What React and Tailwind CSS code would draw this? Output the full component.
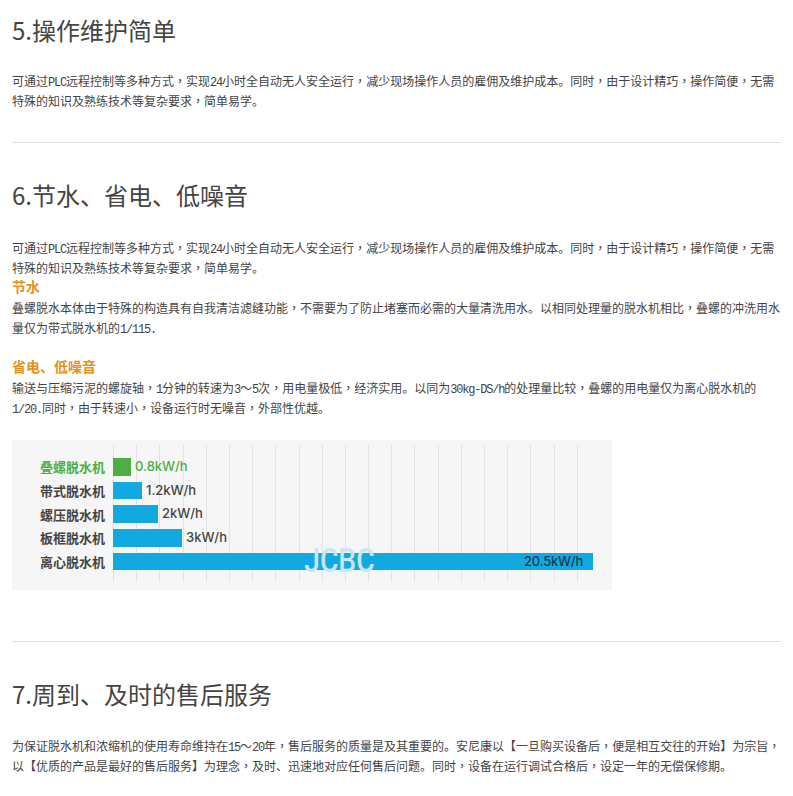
const bodyFont = "font-['Noto_Sans_CJK_SC',sans-serif]";

// latin runs use a squeezed mono so each char takes half a CJK cell, like SimSun
function Txt({ children }) {
  const parts = children.split(/([A-Za-z0-9/.\-]+|，)/);
  return parts.map((p, i) => {
    if (p === "，") {
      return (
        <span key={i} className="font-['Noto_Sans_CJK_TC',sans-serif] leading-none">
          {p}
        </span>
      );
    }
    if (/^[A-Za-z0-9/.\-]+$/.test(p)) {
      return (
        <span key={i} className="font-['Liberation_Mono',monospace] text-xs leading-none tracking-[-1.2px] whitespace-nowrap">
          {p}
        </span>
      );
    }
    return p;
  });
}

function Line({ children }) {
  return (
    <p className="text-xs leading-5 text-[#444]">
      <Txt>{children}</Txt>
    </p>
  );
}

function Heading({ children }) {
  return <h2 className="h-[62px] text-2xl leading-[60px] text-[#444]">{children}</h2>;
}

const intro =
  "可通过PLC远程控制等多种方式，实现24小时全自动无人安全运行，减少现场操作人员的雇佣及维护成本。同时，由于设计精巧，操作简便，无需特殊的知识及熟练技术等复杂要求，简单易学。";

const rows = [
  { name: "叠螺脱水机", value: "0.8kW/h", w: "w-[18px]", bar: "bg-[#4cae44]", text: "text-[#4cae44]" },
  { name: "带式脱水机", value: "1.2kW/h", w: "w-[29px]", bar: "bg-[#12a9e0]", text: "text-[#444]" },
  { name: "螺压脱水机", value: "2kW/h", w: "w-[45px]", bar: "bg-[#12a9e0]", text: "text-[#444]" },
  { name: "板框脱水机", value: "3kW/h", w: "w-[69px]", bar: "bg-[#12a9e0]", text: "text-[#444]" },
];

function Chart() {
  return (
    <div className="relative mt-[22px] h-[150px] w-[600px] bg-[#f6f6f7] pt-[18px] pl-7">
      {/* grid lines */}
      <div className="absolute top-[5px] left-[101px] flex h-[137px] w-[465px] justify-between">
        {Array.from({ length: 21 }).map((_, i) => (
          <div key={i} className="w-px bg-[#e4e4e4]" />
        ))}
      </div>
      <div className="relative flex flex-col gap-[6.2px]">
        {rows.map((r) => (
          <div key={r.name} className="flex h-[17.5px] items-center gap-2">
            <div className={`w-[65px] text-[13px] leading-none font-bold whitespace-nowrap ${r.text}`}>{r.name}</div>
            <div className={`h-full ${r.w} ${r.bar}`} />
            <div className={`-ml-1 font-['Inter',sans-serif] text-[13px] font-medium ${r.text}`}>{r.value}</div>
          </div>
        ))}
        <div className="flex h-[17.5px] items-center gap-2">
          <div className="w-[65px] text-[13px] leading-none font-bold whitespace-nowrap text-[#444]">离心脱水机</div>
          <div className="flex h-full w-[480px] items-center justify-end bg-[#12a9e0] pr-[10px] font-['Inter',sans-serif] text-[13px] font-medium tracking-[-0.2px] text-[#1c3a55]">
            20.5kW/h
          </div>
        </div>
      </div>
      {/* watermark */}
      <div className="absolute top-[105px] left-[285px] w-[70px] text-center font-['Roboto',sans-serif] text-[34px] leading-[30px] font-medium text-[#c9e6f3]">
        <span className="inline-block scale-x-[0.83] whitespace-nowrap">JCBC</span>
      </div>
    </div>
  );
}

export default function App() {
  return (
    <div className={`w-[793px] bg-white px-3 ${bodyFont}`}>
      <Heading>5.操作维护简单</Heading>
      <div className="mt-[9px]">
        <Line>{intro}</Line>
      </div>
      <hr className="mt-[31px] border-t border-[#dedede]" />

      <div className="mt-[22px]">
        <Heading>6.节水、省电、低噪音</Heading>
      </div>
      <div className="mt-[11px]">
        <Line>{intro}</Line>
        <h3 className="h-5 text-sm leading-4 font-bold text-[#e8901a]">节水</h3>
        <Line>叠螺脱水本体由于特殊的构造具有自我清洁滤缝功能，不需要为了防止堵塞而必需的大量清洗用水。以相同处理量的脱水机相比，叠螺的冲洗用水量仅为带式脱水机的1/115.</Line>
        <h3 className="mt-[19px] h-5 text-sm leading-[18px] font-bold text-[#e8901a]">省电、低噪音</h3>
        <div className="mt-px">
          <Line>输送与压缩污泥的螺旋轴，1分钟的转速为3～5次，用电量极低，经济实用。以同为30kg-DS/h的处理量比较，叠螺的用电量仅为离心脱水机的1/20.同时，由于转速小，设备运行时无噪音，外部性优越。</Line>
        </div>
      </div>
      <Chart />
      <hr className="mt-[51px] border-t border-[#dedede]" />

      <div className="mt-[22px]">
        <Heading>7.周到、及时的售后服务</Heading>
      </div>
      <div className="mt-[10px] pb-5">
        <Line>为保证脱水机和浓缩机的使用寿命维持在15～20年，售后服务的质量是及其重要的。安尼康以【一旦购买设备后，便是相互交往的开始】为宗旨，以【优质的产品是最好的售后服务】为理念，及时、迅速地对应任何售后问题。同时，设备在运行调试合格后，设定一年的无偿保修期。</Line>
      </div>
    </div>
  );
}
